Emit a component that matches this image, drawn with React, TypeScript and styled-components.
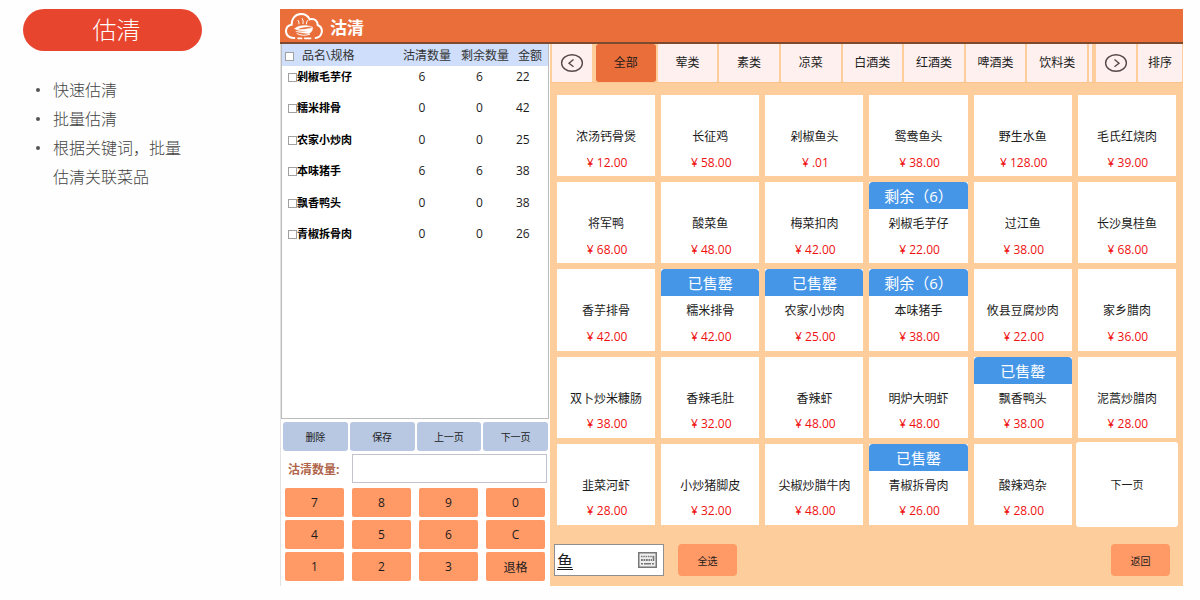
import React, { useState } from "react";
import styled, { createGlobalStyle, css } from "styled-components";

const font = `"Open Sans", "Noto Sans CJK SC", sans-serif`;

const GlobalStyle = createGlobalStyle`
  *, *::before, *::after { box-sizing: border-box; }
  body { margin: 0; background: #fefefe; color: #1c1c1c; font-family: ${font}; font-size: 12px; }
  button, input { font-family: inherit; color: inherit; margin: 0; }
  button { border: 0; padding: 0; cursor: pointer; }
`;

const Page = styled.main`
  display: grid;
  grid-template-columns: 280px minmax(0, 1fr);
  min-height: 100vh;
  padding: 9px 17px 14px 0;
`;

const Intro = styled.section`
  padding: 0 0 0 23px;
`;

const IntroTitle = styled.h1`
  width: 179px;
  margin: 0;
  padding-left: 8px;
  border-radius: 21px;
  background: #e8452f;
  color: #fff;
  font-size: 24px;
  font-weight: 300;
  line-height: 42px;
  text-align: center;
`;

const Features = styled.ul`
  width: 168px;
  margin: 25px 0 0;
  padding: 0 0 0 30px;
  color: #444;
  font-size: 16px;
  font-weight: 300;
  line-height: 29px;
  list-style: none;

  li { position: relative; }
  li::before {
    content: "";
    position: absolute;
    left: -17px;
    top: 12px;
    width: 4px;
    height: 4px;
    border-radius: 50%;
    background: #555;
  }
`;

const Pos = styled.section`
  display: flex;
  flex-direction: column;
`;

const TopBar = styled.header`
  display: flex;
  align-items: center;
  gap: 7px;
  height: 35px;
  padding-left: 5px;
  border-bottom: 2px solid #7d4a30;
  background: #e96e3a;
  color: #fff;

  h2 { margin: 4px 0 0; font-size: 17px; line-height: 24px; }
`;

const Body = styled.div`
  flex: 1;
  display: grid;
  grid-template-columns: 270px minmax(0, 1fr);
`;

const Side = styled.aside`
  display: flex;
  flex-direction: column;
  padding-right: 1px;
  border-left: 1px solid #e2e2e2;
  background: #fff;
`;

const TableBox = styled.div`
  flex: 1;
  border: 1px solid #bcbcbc;
  border-top: 0;
`;

const OrderTable = styled.table`
  width: 100%;
  table-layout: fixed;
  border-collapse: collapse;
  line-height: 22px;

  th { padding: 2px 0 0 2px; background: #cfdffb; color: #333; font-weight: 400; line-height: 20px; text-align: left; white-space: nowrap; }
  td { padding: 0 16px 0 0; text-align: center; vertical-align: top; }
  th:first-child { padding-left: 3px; }
  td:first-child { padding: 0 0 0 6px; text-align: left; }
  td:last-child { padding: 0; text-align: left; }
  tbody tr { height: 31px; }
  tbody tr:nth-child(even) { height: 32px; }
`;

const Check = styled.input`
  appearance: none;
  flex: none;
  width: 9px;
  height: 9px;
  border: 1px solid #a0a0a0;
  background: #fff;
  &:checked { background: #e96e3a; }
`;

const CheckLabel = styled.label<{ $head?: boolean }>`
  display: flex;
  align-items: center;
  gap: ${(p) => (p.$head ? "8px" : "0")};
  ${(p) => !p.$head && css`font-size: 11px; font-weight: 700; color: #000;`}
`;

const Actions = styled.div`
  display: grid;
  grid-template-columns: repeat(4, 1fr);
  gap: 2px;
  padding: 3px 1px 3px 2px;
`;

const ActionButton = styled.button`
  height: 29px;
  border-radius: 3px;
  background: #b8c8e2;
  font-size: 10px;
`;

const QtyRow = styled.div`
  display: grid;
  grid-template-columns: 64px 1fr;
  align-items: center;
  padding: 0 2px 0 7px;

  label { color: #b0664a; font-weight: 700; }
  input { width: 100%; height: 29px; border: 1px solid #c3c3cf; background: #fff; }
`;

const Keypad = styled.div`
  display: grid;
  grid-template-columns: repeat(4, 1fr);
  gap: 3px 8px;
  padding: 5px 4px 5px 4px;
`;

const Key = styled.button`
  height: 29px;
  border-radius: 2px;
  background: #ff9966;
  font-size: 12px;
`;

const Menu = styled.div`
  display: flex;
  flex-direction: column;
  min-width: 0;
  background: #fecd9c;
`;

const Tabs = styled.nav`
  display: flex;
  gap: 4px;
  height: 39px;
  padding: 0 1px 0 2px;
  border-bottom: 1px solid #fbc48e;
`;

const TabGroup = styled.div<{ $grow?: boolean }>`
  display: flex;
  gap: 2px;
  ${(p) => p.$grow && css`flex: 1; min-width: 0;`}
`;

const Tab = styled.button<{ $active?: boolean; $width?: number }>`
  display: flex;
  align-items: center;
  justify-content: center;
  flex: ${(p) => (p.$width ? `0 0 ${p.$width}px` : "1 1 0")};
  min-width: 0;
  border-radius: ${(p) => (p.$active ? "3px" : "1px")};
  background: ${(p) => (p.$active ? "#e96e3a" : "#fef0ef")};
  font-size: 12px;
  line-height: 18px;
`;

const TabEdge = styled.span`
  width: 3px;
  background: #fef0ef;
`;

const Dishes = styled.div`
  flex: 1;
  display: grid;
  grid-template-columns: repeat(6, minmax(0, 1fr));
  grid-auto-rows: 1fr;
  gap: 6px;
  padding: 12px 7px 0 7px;
`;

const DishCard = styled.button`
  display: grid;
  grid-template-rows: 27px 28px 24px;
  align-content: start;
  align-items: center;
  background: #fff;
  font-size: 12px;
  text-align: center;
`;

const Badge = styled.span`
  grid-row: 1;
  height: 27px;
  border-radius: 4px 4px 0 0;
  background: #4696e8;
  color: #fff;
  font-size: 15px;
  line-height: 28px;
`;

const DishName = styled.span`
  grid-row: 2;
`;

const Price = styled.span`
  grid-row: 3;
  padding-left: 2px;
  color: #ee1111;
`;

const NextCard = styled.button`
  margin: -2px;
  border-radius: 3px;
  background: #fff;
  font-size: 11px;
`;

const Footer = styled.footer`
  display: flex;
  align-items: center;
  gap: 14px;
  padding: 19px 13px 10px 4px;
`;

const SearchBox = styled.label`
  display: flex;
  align-items: center;
  width: 110px;
  height: 32px;
  padding: 0 6px 0 2px;
  border: 1px solid #8f8f8f;
  background: #fff;

  input {
    flex: 1;
    min-width: 0;
    height: 28px;
    padding: 0;
    border: 0;
    outline: 0;
    background: none;
    font-size: 16px;
    text-decoration: underline;
    text-decoration-thickness: 1px;
    text-underline-offset: 2px;
  }
`;

const FooterButton = styled.button<{ $end?: boolean }>`
  width: 59px;
  height: 32px;
  margin-left: ${(p) => (p.$end ? "auto" : "0")};
  border-radius: 4px;
  background: #ff9966;
  font-size: 10px;
`;

const Logo = () => (
  <svg width="38" height="28" viewBox="0 0 114 84" fill="none" stroke="#fff" strokeLinecap="round" aria-hidden="true">
    <path d="M28 78C12 79 2 68 3 56C4 45 12 39 20 38C20 18 32 6 48 6C62 6 70 13 74 22C90 18 98 28 98 39C107 43 112 52 110 62C108 71 101 77 92 78" strokeWidth="6" />
    <path d="M39 25q5 5 3 11M52 20q5 7 2 15M68 25q-4 4-4 11" strokeWidth="3" />
    <path d="M29 50C40 38 68 38 82 45C66 43 46 46 38 52C52 54 72 51 83 46C84 54 79 62 72 65C56 64 41 62 32 58C40 59 58 60 68 57C52 58 36 56 29 50Z" fill="#fff" strokeWidth="1" />
    <path d="M36 65C46 71 64 71 74 67" strokeWidth="3" />
    <path d="M39 79H50M59 79H77" strokeWidth="5" />
  </svg>
);

const ArrowIcon = ({ next }: { next?: boolean }) => (
  <svg width="24" height="20" viewBox="0 0 24 20" fill="none" stroke="#55494a" strokeWidth="1.4" aria-hidden="true">
    <ellipse cx="12" cy="10" rx="10.4" ry="8.3" />
    <path d={next ? "M10.5 6.5L15 10.2L10.5 13.8" : "M13.5 6.5L9 10.2L13.5 13.8"} />
  </svg>
);

const KeyboardIcon = () => (
  <svg width="19" height="16" viewBox="0 0 19 16" fill="none" stroke="#777" aria-hidden="true">
    <rect x="0.75" y="0.75" width="17.5" height="14.5" fill="#eee" strokeWidth="1.5" />
    <path d="M3 4.5H16" strokeWidth="1.5" strokeDasharray="1.5 0.8" />
    <path d="M3 8H14" strokeWidth="1.8" strokeDasharray="1.8 0.7" />
    <path d="M15.5 4V9M3 11.8H5M6 11.8H13M14 11.8H16" strokeWidth="1.6" />
  </svg>
);

const features = ["快速估清", "批量估清", "根据关键词，批量估清关联菜品"];

const orders: [string, number, number, number][] = [
  ["剁椒毛芋仔", 6, 6, 22],
  ["糯米排骨", 0, 0, 42],
  ["农家小炒肉", 0, 0, 25],
  ["本味猪手", 6, 6, 38],
  ["飘香鸭头", 0, 0, 38],
  ["青椒拆骨肉", 0, 0, 26],
];

const keys = ["7", "8", "9", "0", "4", "5", "6", "C", "1", "2", "3", "退格"];
const categories = ["全部", "荤类", "素类", "凉菜", "白酒类", "红酒类", "啤酒类", "饮料类"];

const SOLD_OUT = "已售罄";
const dishes: [string, string, string?][] = [
  ["浓汤钙骨煲", "12.00"], ["长征鸡", "58.00"], ["剁椒鱼头", ".01"],
  ["鸳鸯鱼头", "38.00"], ["野生水鱼", "128.00"], ["毛氏红烧肉", "39.00"],
  ["将军鸭", "68.00"], ["酸菜鱼", "48.00"], ["梅菜扣肉", "42.00"],
  ["剁椒毛芋仔", "22.00", "剩余（6）"], ["过江鱼", "38.00"], ["长沙臭桂鱼", "68.00"],
  ["香芋排骨", "42.00"], ["糯米排骨", "42.00", SOLD_OUT], ["农家小炒肉", "25.00", SOLD_OUT],
  ["本味猪手", "38.00", "剩余（6）"], ["攸县豆腐炒肉", "22.00"], ["家乡腊肉", "36.00"],
  ["双卜炒米糠肠", "38.00"], ["香辣毛肚", "32.00"], ["香辣虾", "48.00"],
  ["明炉大明虾", "48.00"], ["飘香鸭头", "38.00", SOLD_OUT], ["泥蒿炒腊肉", "28.00"],
  ["韭菜河虾", "28.00"], ["小炒猪脚皮", "32.00"], ["尖椒炒腊牛肉", "48.00"],
  ["青椒拆骨肉", "26.00", SOLD_OUT], ["酸辣鸡杂", "28.00"],
];

export default function App() {
  const [quantity, setQuantity] = useState("");
  const [category, setCategory] = useState(categories[0]);

  const press = (key: string) => {
    if (key === "C") setQuantity("");
    else if (key === "退格") setQuantity((q) => q.slice(0, -1));
    else setQuantity((q) => q + key);
  };

  return (
    <>
      <GlobalStyle />
      <Page lang="zh-CN">
        <Intro>
          <IntroTitle>估清</IntroTitle>
          <Features>
            {features.map((text) => <li key={text}>{text}</li>)}
          </Features>
        </Intro>
        <Pos>
          <TopBar>
            <Logo />
            <h2>沽清</h2>
          </TopBar>
          <Body>
            <Side>
              <TableBox>
                <OrderTable>
                  <colgroup>
                    <col />
                    <col width="58" />
                    <col width="57" />
                    <col width="32" />
                  </colgroup>
                  <thead>
                    <tr>
                      <th><CheckLabel $head><Check type="checkbox" />品名\规格</CheckLabel></th>
                      <th>沽清数量</th>
                      <th>剩余数量</th>
                      <th>金额</th>
                    </tr>
                  </thead>
                  <tbody>
                    {orders.map(([name, sold, left, price]) => (
                      <tr key={name}>
                        <td><CheckLabel><Check type="checkbox" />{name}</CheckLabel></td>
                        <td>{sold}</td>
                        <td>{left}</td>
                        <td>{price}</td>
                      </tr>
                    ))}
                  </tbody>
                </OrderTable>
              </TableBox>
              <Actions>
                {["删除", "保存", "上一页", "下一页"].map((text) => (
                  <ActionButton key={text} type="button">{text}</ActionButton>
                ))}
              </Actions>
              <QtyRow>
                <label htmlFor="quantity">沽清数量:</label>
                <input id="quantity" value={quantity} onChange={(e) => setQuantity(e.target.value)} />
              </QtyRow>
              <Keypad>
                {keys.map((key) => (
                  <Key key={key} type="button" onClick={() => press(key)}>{key}</Key>
                ))}
              </Keypad>
            </Side>
            <Menu>
              <Tabs>
                <Tab type="button" $width={40} aria-label="上一组"><ArrowIcon /></Tab>
                <TabGroup $grow>
                  {categories.map((text) => (
                    <Tab key={text} type="button" $active={text === category} onClick={() => setCategory(text)}>
                      {text}
                    </Tab>
                  ))}
                  <TabEdge />
                </TabGroup>
                <TabGroup>
                  <Tab type="button" $width={40} aria-label="下一组"><ArrowIcon next /></Tab>
                  <Tab type="button" $width={44}>排序</Tab>
                </TabGroup>
              </Tabs>
              <Dishes>
                {dishes.map(([name, price, badge]) => (
                  <DishCard key={name} type="button">
                    {badge && <Badge>{badge}</Badge>}
                    <DishName>{name}</DishName>
                    <Price>¥ {price}</Price>
                  </DishCard>
                ))}
                <NextCard type="button">下一页</NextCard>
              </Dishes>
              <Footer>
                <SearchBox>
                  <input aria-label="关键词" defaultValue="鱼" />
                  <KeyboardIcon />
                </SearchBox>
                <FooterButton type="button">全选</FooterButton>
                <FooterButton type="button" $end>返回</FooterButton>
              </Footer>
            </Menu>
          </Body>
        </Pos>
      </Page>
    </>
  );
}
